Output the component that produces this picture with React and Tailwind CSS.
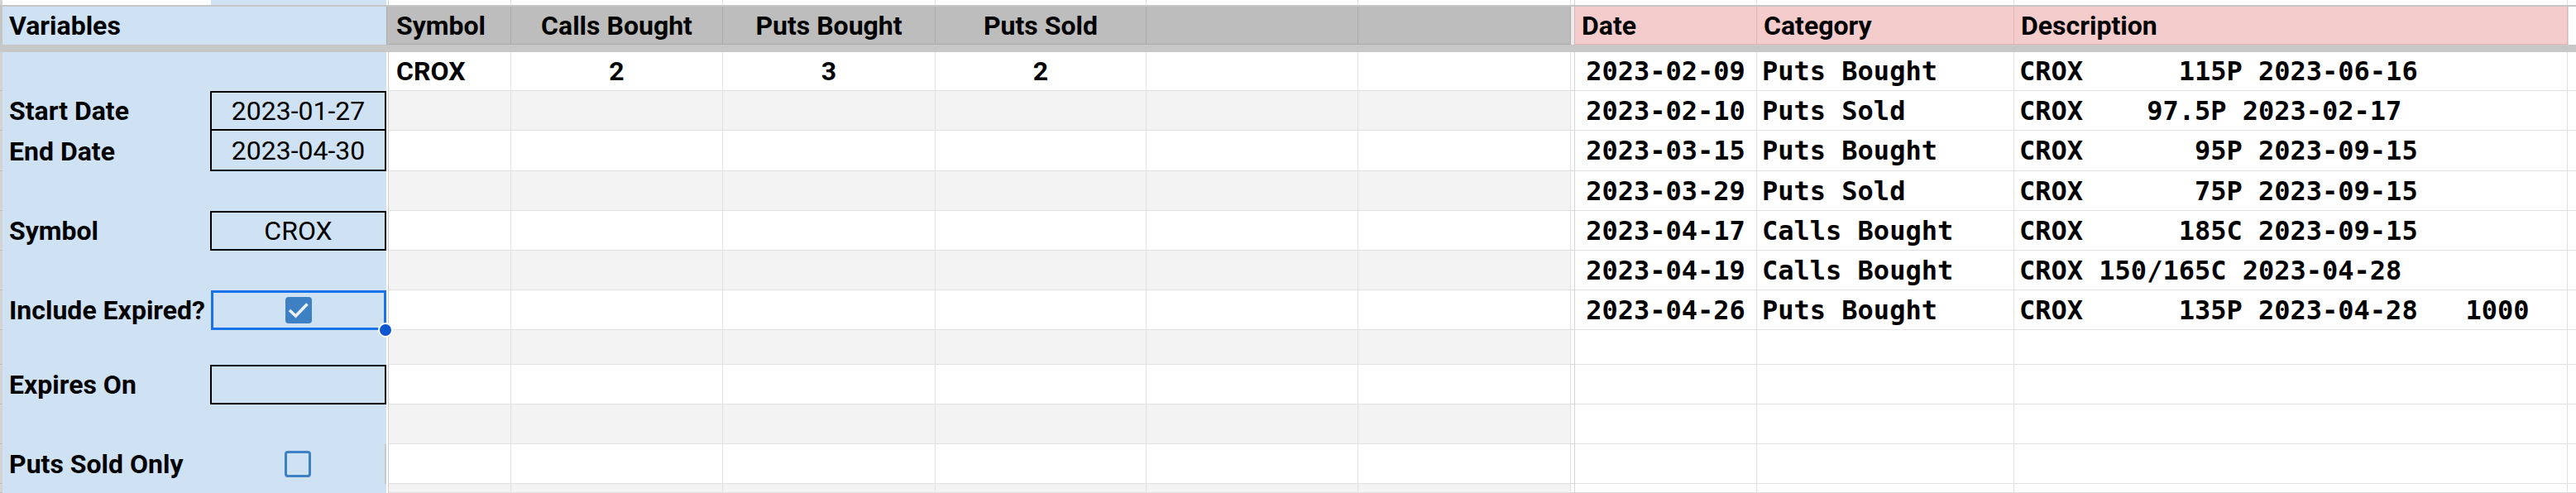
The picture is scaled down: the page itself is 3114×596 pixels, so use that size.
import React from 'react'

const symCols = ['w-[148px]', 'w-[256px]', 'w-[257px]', 'w-[255px]', 'w-[256px]', 'w-[257px]']
const symHeads = ['Symbol', 'Calls Bought', 'Puts Bought', 'Puts Sold', '', '']
const logCols = ['w-[220px]', 'w-[311px]', 'w-[669px]']
const logHeads = ['Date', 'Category', 'Description']

const rows = [
  { h: 'h-[47px]', sym: ['CROX', '2', '3', '2'], log: ['2023-02-09', 'Puts Bought', 'CROX      115P 2023-06-16'] },
  { h: 'h-[48px]', label: 'Start Date', field: 'top', value: '2023-01-27', log: ['2023-02-10', 'Puts Sold', 'CROX    97.5P 2023-02-17'] },
  { h: 'h-[49px]', label: 'End Date', field: 'rest', value: '2023-04-30', log: ['2023-03-15', 'Puts Bought', 'CROX       95P 2023-09-15'] },
  { h: 'h-[48px]', log: ['2023-03-29', 'Puts Sold', 'CROX       75P 2023-09-15'] },
  { h: 'h-[48px]', label: 'Symbol', field: 'top', value: 'CROX', log: ['2023-04-17', 'Calls Bought', 'CROX      185C 2023-09-15'] },
  { h: 'h-[48px]', log: ['2023-04-19', 'Calls Bought', 'CROX 150/165C 2023-04-28'] },
  { h: 'h-[48px]', label: 'Include Expired?', field: 'selected', check: true, log: ['2023-04-26', 'Puts Bought', 'CROX      135P 2023-04-28   1000'] },
  { h: 'h-[42px]' },
  { h: 'h-[48px]', label: 'Expires On', field: 'top', value: '' },
  { h: 'h-[48px]' },
  { h: 'h-[48px]', label: 'Puts Sold Only', field: 'edge', check: false },
  { h: 'h-[11px]' },
]

const Checkbox = ({ checked }) =>
  checked ? (
    <div className="w-[32px] h-[32px] rounded-[4px] bg-[#3d80c4] flex items-center justify-center">
      <svg width="32" height="32" viewBox="0 0 32 32">
        <path d="M5 16 L12.5 23 L26.5 8.5" fill="none" stroke="#eef3fa" strokeWidth="3.5" />
      </svg>
    </div>
  ) : (
    <div className="w-[32px] h-[32px] rounded-[4px] border-[3px] border-[#3d80c4]" />
  )

const Field = ({ row }) => {
  if (!row.field) return null
  const inner = row.check !== undefined ? <Checkbox checked={row.check} /> : row.value

  if (row.field === 'selected') {
    return (
      <div className="h-full border-[3px] border-[#1a73e8] flex items-center justify-center">
        {inner}
        <div className="absolute -right-[8px] -bottom-[9px] w-[18px] h-[18px] rounded-full bg-[#0b57d0] border-2 border-white z-10" />
      </div>
    )
  }
  if (row.field === 'edge') {
    return <div className="h-full border-r-2 border-[#c9c9c9] flex items-center justify-center">{inner}</div>
  }
  const border = row.field === 'rest' ? 'border-2 border-t-0 border-black' : 'border-2 border-black'
  return (
    <div className={`h-full -ml-px ${border} flex items-center justify-center text-[32px] leading-none`}>
      {inner}
    </div>
  )
}

const DataRow = ({ row, i }) => {
  const shade = i % 2 === 1 ? 'bg-[#f3f3f3]' : 'bg-white'
  return (
    <div className={`flex shrink-0 ${row.h}`}>
      <div className="w-[3px] shrink-0 bg-[#d3d3d3] border-b border-[#bcbcbc]" />
      <div className="w-[252px] shrink-0 bg-[#cfe2f3] flex items-center pl-[8px] text-[32px] font-bold leading-none whitespace-nowrap">
        {row.label}
      </div>
      <div className="w-[212px] shrink-0 bg-[#cfe2f3] relative">
        <Field row={row} />
      </div>
      <div className="w-[3px] shrink-0 bg-white border-r border-[#d0d0d0]" />
      {symCols.map((w, c) => (
        <div
          key={c}
          className={`${w} shrink-0 ${shade} border-r border-b border-[#e1e1e1] flex items-center ${c === 0 ? 'pl-[9px]' : 'justify-center'} text-[32px] font-bold leading-none`}
        >
          {row.sym?.[c]}
        </div>
      ))}
      <div className="w-[5px] shrink-0 bg-white border-r border-b border-[#d6d6d6]" />
      {logCols.map((w, c) => (
        <div
          key={c}
          className={`${w} shrink-0 bg-white border-r border-b border-[#e1e1e1] flex items-center ${c === 0 ? 'justify-center' : 'pl-[6px]'} font-['DejaVu_Sans_Mono',monospace] text-[32px] font-bold leading-none whitespace-pre`}
        >
          {row.log?.[c]}
        </div>
      ))}
      <div className="w-[10px] shrink-0 bg-white border-b border-[#e1e1e1]" />
    </div>
  )
}

export default function App() {
  return (
    <div className="w-[3114px] h-[596px] overflow-hidden bg-white flex flex-col font-['Roboto',sans-serif] text-black">
      {/* row above the header */}
      <div className="flex shrink-0 h-[8px] border-b-2 border-[#c6c6c6]">
        <div className="w-[3px] shrink-0 bg-[#d3d3d3]" />
        <div className="w-[252px] shrink-0 bg-white" />
        <div className="w-[212px] shrink-0 bg-[#cfe2f3]" />
        <div className="w-[3px] shrink-0 bg-white border-r border-[#d0d0d0]" />
        {symCols.map((w, c) => (
          <div key={c} className={`${w} shrink-0 bg-white border-r border-[#e1e1e1]`} />
        ))}
        <div className="w-[5px] shrink-0 bg-white border-r border-[#d6d6d6]" />
        {logCols.map((w, c) => (
          <div key={c} className={`${w} shrink-0 bg-white border-r border-[#e1e1e1]`} />
        ))}
        <div className="w-[10px] shrink-0 bg-white" />
      </div>

      {/* header */}
      <div className="flex shrink-0 h-[46px]">
        <div className="w-[3px] shrink-0 bg-[#c4c4c4]" />
        <div className="w-[464px] shrink-0 bg-[#cfe2f3] flex items-center pl-[8px] text-[32px] font-bold leading-none">
          Variables
        </div>
        <div className="w-[3px] shrink-0 bg-[#bdbdbd] border-l border-[#a9a9a9]" />
        {symCols.map((w, c) => (
          <div
            key={c}
            className={`${w} shrink-0 bg-[#bdbdbd] border-r border-b border-[#acacac] flex items-center ${c === 0 ? 'pl-[9px]' : 'justify-center'} text-[32px] font-bold leading-none`}
          >
            {symHeads[c]}
          </div>
        ))}
        <div className="w-[5px] shrink-0 bg-[#ececec] border-r border-[#d9b4b4]" />
        {logCols.map((w, c) => (
          <div
            key={c}
            className={`${w} shrink-0 bg-[#f4cccc] border-r border-b border-[#dfb5b5] flex items-center pl-[8px] text-[32px] font-bold leading-none`}
          >
            {logHeads[c]}
          </div>
        ))}
        <div className="w-[10px] shrink-0 bg-white border-l border-[#d6d6d6]" />
      </div>

      {/* frozen row divider */}
      <div className="shrink-0 h-[9px] bg-[#c7c7c7]" />

      {rows.map((row, i) => (
        <DataRow key={i} row={row} i={i} />
      ))}
    </div>
  )
}
